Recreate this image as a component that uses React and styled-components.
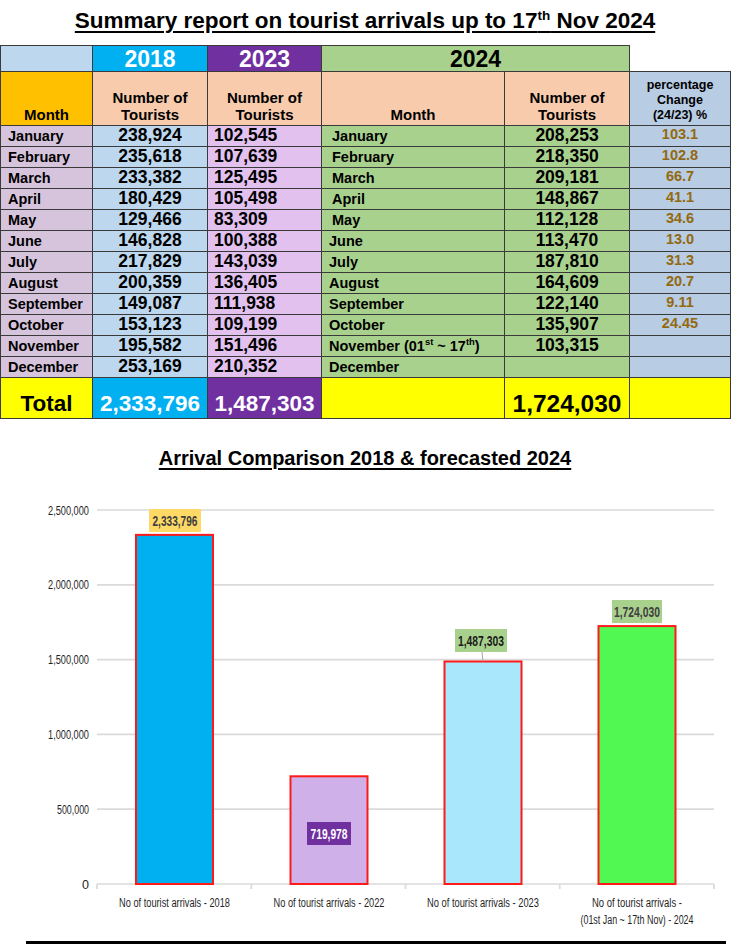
import styled, { createGlobalStyle } from 'styled-components';

const GlobalStyle = createGlobalStyle`
  body {
    margin: 0;
    background: #fff;
    font-family: "Liberation Sans", Arial, sans-serif;
    color: #000;
  }
`;

const Page = styled.div`
  width: 750px;
`;

const Title = styled.h1`
  margin: 0;
  width: 730px;
  height: 45px;
  line-height: 41px;
  text-align: center;
  font-size: 22.5px;
  font-weight: bold;
  text-decoration: underline;
  text-decoration-thickness: 2px;
  text-underline-offset: 3px;

  sup {
    font-size: 0.6em;
    line-height: 0;
  }
`;

const Table = styled.table`
  width: 730px;
  border-collapse: collapse;
  table-layout: fixed;
  font-weight: bold;
`;

const Row = styled.tr`
  height: ${(p) => p.$h}px;
`;

const YearCell = styled.td`
  border: 1px solid #3a3a3a;
  background: ${(p) => p.$bg};
  color: ${(p) => p.$color || '#000'};
  font-size: 23px;
  text-align: center;
  vertical-align: middle;
  padding: 0;
  line-height: 24px;
`;

const BlankCell = styled.td`
  border: none;
  padding: 0;
`;

const HeadCell = styled.td`
  border: 1px solid #3a3a3a;
  background: ${(p) => p.$bg || '#f8cbad'};
  font-size: ${(p) => p.$size || 15}px;
  line-height: ${(p) => p.$lh || 17}px;
  text-align: center;
  vertical-align: bottom;
  padding: 0 0 2px;
`;

const MonthCell = styled.td`
  border: 1px solid #3a3a3a;
  background: ${(p) => p.$bg};
  font-size: 14.5px;
  line-height: 17px;
  vertical-align: bottom;
  padding: 0 0 1px ${(p) => p.$ind || 7}px;
  white-space: nowrap;

  sup {
    font-size: 0.65em;
    line-height: 0;
  }
`;

const NumCell = styled.td`
  border: 1px solid #3a3a3a;
  background: ${(p) => p.$bg};
  font-size: 17.5px;
  line-height: 19px;
  text-align: ${(p) => p.$align || 'center'};
  vertical-align: bottom;
  padding: 0 0 1px ${(p) => p.$pl || 0}px;
`;

const PctCell = styled.td`
  border: 1px solid #3a3a3a;
  background: #b8cce4;
  color: #93690f;
  font-size: 14.5px;
  line-height: 16px;
  text-align: center;
  vertical-align: top;
  padding: 0;
`;

const TotalCell = styled.td`
  border: 1px solid #3a3a3a;
  background: ${(p) => p.$bg || '#ffff00'};
  color: ${(p) => p.$color || '#000'};
  font-size: ${(p) => p.$size || 22.5}px;
  line-height: 26px;
  text-align: center;
  vertical-align: bottom;
  padding: 0 0 1px;
`;

const ChartTitle = styled.h2`
  margin: 24px 0 0;
  width: 730px;
  height: 30px;
  line-height: 30px;
  text-align: center;
  font-size: 20px;
  font-weight: bold;
  text-decoration: underline;
  text-decoration-thickness: 2px;
  text-underline-offset: 3px;
`;

const ChartSvg = styled.svg`
  display: block;
`;

const Rule = styled.div`
  width: 700px;
  margin: 13px 0 0 26px;
  border-top: 3px solid #000;
`;

const MONTHS = [
  'January', 'February', 'March', 'April', 'May', 'June',
  'July', 'August', 'September', 'October', 'November', 'December',
];

const ROWS = [
  ['238,924', '102,545', '208,253', '103.1'],
  ['235,618', '107,639', '218,350', '102.8'],
  ['233,382', '125,495', '209,181', '66.7'],
  ['180,429', '105,498', '148,867', '41.1'],
  ['129,466', '83,309', '112,128', '34.6'],
  ['146,828', '100,388', '113,470', '13.0'],
  ['217,829', '143,039', '187,810', '31.3'],
  ['200,359', '136,405', '164,609', '20.7'],
  ['149,087', '111,938', '122,140', '9.11'],
  ['153,123', '109,199', '135,907', '24.45'],
  ['195,582', '151,496', '103,315', ''],
  ['253,169', '210,352', '', ''],
];

const Y0 = 411;
const SCALE = 374 / 2500000;
const yOf = (v) => Y0 - v * SCALE;

const TICKS = [
  { v: 2500000, t: '2,500,000', w: 41 },
  { v: 2000000, t: '2,000,000', w: 41 },
  { v: 1500000, t: '1,500,000', w: 41 },
  { v: 1000000, t: '1,000,000', w: 41 },
  { v: 500000, t: '500,000', w: 32 },
  { v: 0, t: '0', w: 0 },
];

const BARS = [
  {
    cx: 174.5, v: 2333796, fill: '#00b0f0',
    label: { t: '2,333,796', x: 149, y: 36, w: 52, tw: 45, bg: '#ffd966', color: '#404040' },
    lines: [['No of tourist arrivals - 2018', 111]],
  },
  {
    cx: 329, v: 719978, fill: '#d0b0e8',
    label: { t: '719,978', x: 307, y: 349, w: 44, tw: 37, bg: '#7030a0', color: '#fff' },
    lines: [['No of tourist arrivals - 2022', 111]],
  },
  {
    cx: 483, v: 1487303, fill: '#a9e7fd',
    label: { t: '1,487,303', x: 455, y: 156, w: 52, tw: 46, bg: '#a9d18e', color: '#1a1a1a', leader: true },
    lines: [['No of tourist arrivals - 2023', 112]],
  },
  {
    cx: 637, v: 1724030, fill: '#52f852',
    label: { t: '1,724,030', x: 612, y: 127, w: 50, tw: 46, bg: '#a9d18e', color: '#404040' },
    lines: [['No of tourist arrivals -', 90], ['(01st Jan ~ 17th Nov) - 2024', 113]],
  },
];

const AXIS_FONT = '"Liberation Sans Narrow", "Liberation Sans", Arial, sans-serif';

function Chart() {
  return (
    <ChartSvg width="750" height="455" viewBox="0 0 750 455">
      {TICKS.map((tk) => (
        <g key={tk.t}>
          <line x1="97" x2="714" y1={yOf(tk.v)} y2={yOf(tk.v)} stroke="#dadada" strokeWidth="1.7" />
          <text
            x="89"
            y={yOf(tk.v) + 4.5}
            textAnchor="end"
            fontFamily={AXIS_FONT}
            fontSize="12.5"
            fill="#1f1f1f"
            {...(tk.w ? { textLength: tk.w, lengthAdjust: 'spacingAndGlyphs' } : {})}
          >
            {tk.t}
          </text>
        </g>
      ))}
      {[97, 251.25, 405.5, 559.75, 714].map((x) => (
        <line key={x} x1={x} x2={x} y1={Y0} y2={Y0 + 5} stroke="#dadada" strokeWidth="1.7" />
      ))}
      {BARS.map((b) => {
        const top = yOf(b.v);
        const l = b.label;
        return (
          <g key={b.cx}>
            <rect x={b.cx - 38.5} y={top} width="77" height={Y0 - top} fill={b.fill} stroke="#ff1a1a" strokeWidth="2" />
            {l.leader && <line x1={b.cx - 1} x2={b.cx} y1={l.y + 23} y2={top} stroke="#a6a6a6" strokeWidth="1" />}
            <rect x={l.x} y={l.y} width={l.w} height="23" fill={l.bg} />
            <text
              x={l.x + l.w / 2}
              y={l.y + 16.5}
              textAnchor="middle"
              fontFamily={AXIS_FONT}
              fontWeight="bold"
              fontSize="14"
              fill={l.color}
              textLength={l.tw}
              lengthAdjust="spacingAndGlyphs"
            >
              {l.t}
            </text>
            {b.lines.map(([t, w], i) => (
              <text
                key={t}
                x={b.cx}
                y={434 + i * 17}
                textAnchor="middle"
                fontFamily={AXIS_FONT}
                fontSize="12.5"
                fill="#1f1f1f"
                textLength={w}
                lengthAdjust="spacingAndGlyphs"
              >
                {t}
              </text>
            ))}
          </g>
        );
      })}
    </ChartSvg>
  );
}

export default function App() {
  return (
    <Page>
      <GlobalStyle />
      <Title>
        Summary report on tourist arrivals up to 17<sup>th</sup> Nov 2024
      </Title>
      <Table>
        <colgroup>
          <col style={{ width: 92 }} />
          <col style={{ width: 115 }} />
          <col style={{ width: 114 }} />
          <col style={{ width: 183 }} />
          <col style={{ width: 125 }} />
          <col style={{ width: 101 }} />
        </colgroup>
        <tbody>
          <Row $h={26}>
            <YearCell $bg="#bdd7ee" />
            <YearCell $bg="#00b0f0" $color="#fff">2018</YearCell>
            <YearCell $bg="#7030a0" $color="#fff">2023</YearCell>
            <YearCell $bg="#a9d18e" colSpan={2}>2024</YearCell>
            <BlankCell />
          </Row>
          <Row $h={54}>
            <HeadCell $bg="#ffc000">Month</HeadCell>
            <HeadCell>Number of<br />Tourists</HeadCell>
            <HeadCell>Number of<br />Tourists</HeadCell>
            <HeadCell>Month</HeadCell>
            <HeadCell>Number of<br />Tourists</HeadCell>
            <HeadCell $bg="#b8cce4" $size={12.5} $lh={15}>
              percentage<br />Change<br />(24/23) %
            </HeadCell>
          </Row>
          {ROWS.map((r, i) => (
            <Row $h={21} key={MONTHS[i]}>
              <MonthCell $bg="#d6c4dc">{MONTHS[i]}</MonthCell>
              <NumCell $bg="#bdd7ee">{r[0]}</NumCell>
              <NumCell $bg="#e2c1ef" $align="left" $pl={6}>{r[1]}</NumCell>
              <MonthCell $bg="#a9d18e" $ind={i < 5 ? 10 : 7}>
                {i === 10 ? (
                  <>November (01<sup>st</sup> ~ 17<sup>th</sup>)</>
                ) : (
                  MONTHS[i]
                )}
              </MonthCell>
              <NumCell $bg="#a9d18e">{r[2]}</NumCell>
              <PctCell>{r[3]}</PctCell>
            </Row>
          ))}
          <Row $h={41}>
            <TotalCell>Total</TotalCell>
            <TotalCell $bg="#00b0f0" $color="#fff">2,333,796</TotalCell>
            <TotalCell $bg="#7030a0" $color="#fff">1,487,303</TotalCell>
            <TotalCell />
            <TotalCell $size={24.5}>1,724,030</TotalCell>
            <TotalCell />
          </Row>
        </tbody>
      </Table>
      <ChartTitle>Arrival Comparison 2018 &amp; forecasted 2024</ChartTitle>
      <Chart />
      <Rule />
    </Page>
  );
}
